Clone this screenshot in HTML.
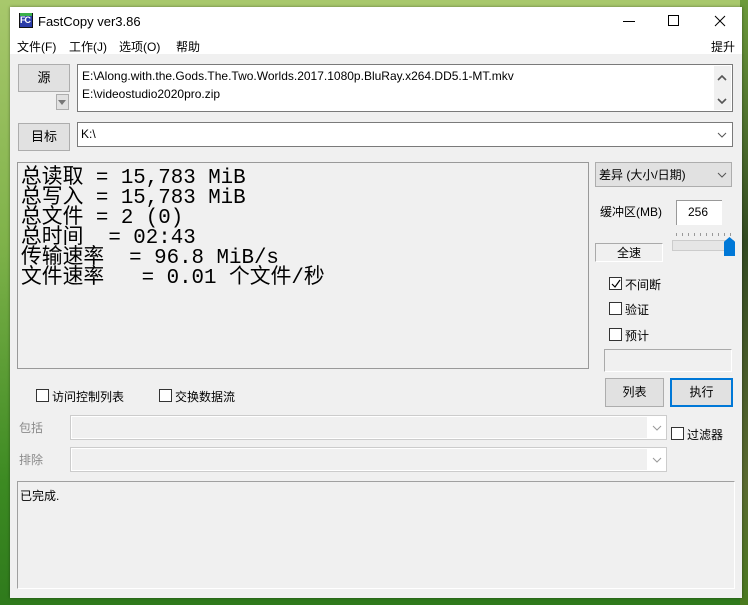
<!DOCTYPE html>
<html><head><meta charset="utf-8"><style>
*{margin:0;padding:0;box-sizing:border-box}
body{width:748px;height:605px;overflow:hidden;position:relative;font-family:"Liberation Sans","Noto Sans CJK SC",sans-serif;font-size:12px;color:#000;
background:linear-gradient(180deg,#a8c86c 0%,#7fb24a 40%,#3c8a22 80%,#2f7a1c 100%)}
.bgr{position:absolute;right:0;top:0;width:8px;height:605px;background:linear-gradient(180deg,#6c9a3a,#334a22 40%,#5a6a30 80%,#4a7a20)}
.a{position:absolute}
.win{position:absolute;left:10px;top:7px;width:732px;height:591px;background:#f0f0f0;box-shadow:0 0 3px rgba(0,0,0,.4)}
.t{position:absolute;white-space:nowrap}
.btn{position:absolute;background:#e1e1e1;border:1px solid #adadad;text-align:center;font-size:13px}
.box{position:absolute;background:#fff;border:1px solid #7a7a7a}
.cb{position:absolute;width:13px;height:13px;border:1px solid #333;background:#fff}
.dis{position:absolute;border:1px solid #ccc;background:#f0f0f0}
svg.c{position:absolute;width:10px;height:6px}
</style></head><body>
<div class="bgr"></div>
<div class="win"></div>
<div class="a" style="left:10px;top:7px;width:732px;height:47px;background:#fff"></div>
<div class="a" style="left:19px;top:13px;width:14px;height:15px;background:#2a3ca8;border:1px solid #111"></div>
<div class="a" style="left:20px;top:13px;width:12px;height:3px;background:#3ab04a"></div>
<div class="t" style="left:20px;top:15px;font-size:9px;font-weight:bold;color:#fff;letter-spacing:-1px">FC</div>
<div class="t" style="left:38px;top:14px;font-size:13px">FastCopy ver3.86</div>
<div class="a" style="left:623px;top:21px;width:12px;height:1px;background:#000"></div>
<div class="a" style="left:668px;top:15px;width:11px;height:11px;border:1px solid #000"></div>
<svg class="a" style="left:714px;top:15px;width:12px;height:12px" viewBox="0 0 12 12"><path d="M1 1L11 11M11 1L1 11" stroke="#000" stroke-width="1"/></svg>
<div class="t" style="left:17px;top:38px;font-size:12px">文件(F)</div>
<div class="t" style="left:69px;top:38px;font-size:12px">工作(J)</div>
<div class="t" style="left:119px;top:38px;font-size:12px">选项(O)</div>
<div class="t" style="left:176px;top:38px;font-size:12px">帮助</div>
<div class="t" style="left:711px;top:38px;font-size:12px">提升</div>

<div class="btn" style="left:18px;top:64px;width:52px;height:28px;line-height:26px">源</div>
<div class="a" style="left:56px;top:94px;width:13px;height:16px;background:#e1e1e1;border:1px solid #adadad"></div>
<div class="a" style="left:58px;top:100px;border-left:4px solid transparent;border-right:4px solid transparent;border-top:5px solid #777"></div>
<div class="box" style="left:77px;top:64px;width:656px;height:48px"></div>
<div class="a" style="left:714px;top:66px;width:17px;height:44px;background:#f0f0f0"></div>
<svg class="c" style="left:717px;top:75px" viewBox="0 0 10 6"><path d="M1 5L5 1L9 5" fill="none" stroke="#555" stroke-width="1.6"/></svg>
<svg class="c" style="left:717px;top:98px" viewBox="0 0 10 6"><path d="M1 1L5 5L9 1" fill="none" stroke="#555" stroke-width="1.6"/></svg>
<div class="t" style="left:82px;top:69px;font-size:12px">E:\Along.with.the.Gods.The.Two.Worlds.2017.1080p.BluRay.x264.DD5.1-MT.mkv</div>
<div class="t" style="left:82px;top:87px;font-size:12px">E:\videostudio2020pro.zip</div>

<div class="btn" style="left:18px;top:123px;width:52px;height:28px;line-height:26px">目标</div>
<div class="box" style="left:77px;top:122px;width:656px;height:25px"></div>
<div class="t" style="left:81px;top:127px;font-size:12px">K:\</div>
<svg class="c" style="left:717px;top:132px" viewBox="0 0 10 6"><path d="M1 1L5 5L9 1" fill="none" stroke="#555" stroke-width="1"/></svg>

<div class="a" style="left:17px;top:162px;width:572px;height:207px;background:#f0f0f0;border:1px solid #999"></div>
<div class="t" style="left:21px;top:169px;font-family:'Liberation Mono','Noto Sans CJK SC',monospace;font-size:20.8px;line-height:20px">总读取 = 15,783 MiB<br>总写入 = 15,783 MiB<br>总文件 = 2 (0)<br>总时间&nbsp; = 02:43<br>传输速率&nbsp; = 96.8 MiB/s<br>文件速率&nbsp;&nbsp; = 0.01 个文件/秒</div>

<div class="a" style="left:595px;top:162px;width:137px;height:25px;background:#e1e1e1;border:1px solid #adadad"></div>
<div class="t" style="left:599px;top:166px;font-size:12px">差异 (大小/日期)</div>
<svg class="c" style="left:717px;top:172px" viewBox="0 0 10 6"><path d="M1 1L5 5L9 1" fill="none" stroke="#555" stroke-width="1"/></svg>
<div class="t" style="left:600px;top:203px;font-size:12px">缓冲区(MB)</div>
<div class="a" style="left:676px;top:200px;width:46px;height:25px;background:#fff;border-left:1px solid #999;border-top:1px solid #999"></div>
<div class="t" style="left:688px;top:205px;font-size:12px">256</div>
<div class="a" style="left:595px;top:243px;width:68px;height:19px;border:1px solid #aaa;border-right-color:#fff;border-bottom-color:#fff"></div>
<div class="t" style="left:617px;top:244px;font-size:12px">全速</div>
<div class="a" style="left:676px;top:233px;width:56px;height:3px;background:repeating-linear-gradient(90deg,#999 0 1px,transparent 1px 6px)"></div>
<div class="a" style="left:672px;top:240px;width:62px;height:11px;background:#e6e6e6;border:1px solid #ccc"></div>
<div class="a" style="left:724px;top:237px;width:11px;height:19px;background:#0078d7;clip-path:polygon(50% 0,100% 25%,100% 100%,0 100%,0 25%)"></div>

<div class="cb" style="left:609px;top:277px"></div>
<svg class="a" style="left:611px;top:279px;width:10px;height:10px" viewBox="0 0 10 10"><path d="M1 5L4 8L9 1" fill="none" stroke="#000" stroke-width="1.2"/></svg>
<div class="t" style="left:625px;top:276px;font-size:12px">不间断</div>
<div class="cb" style="left:609px;top:302px"></div>
<div class="t" style="left:625px;top:301px;font-size:12px">验证</div>
<div class="cb" style="left:609px;top:328px"></div>
<div class="t" style="left:625px;top:327px;font-size:12px">预计</div>
<div class="a" style="left:604px;top:349px;width:128px;height:23px;border:1px solid #aaa;border-right-color:#fff;border-bottom-color:#fff"></div>
<div class="btn" style="left:605px;top:378px;width:59px;height:29px;line-height:27px;font-size:12px">列表</div>
<div class="btn" style="left:670px;top:378px;width:63px;height:29px;line-height:25px;font-size:12px;border:2px solid #0078d7">执行</div>

<div class="cb" style="left:36px;top:389px"></div>
<div class="t" style="left:52px;top:388px;font-size:12px">访问控制列表</div>
<div class="cb" style="left:159px;top:389px"></div>
<div class="t" style="left:175px;top:388px;font-size:12px">交换数据流</div>

<div class="t" style="left:19px;top:419px;font-size:12px;color:#8a8a8a">包括</div>
<div class="dis" style="left:70px;top:415px;width:597px;height:25px;background:#fff"></div>
<div class="a" style="left:72px;top:417px;width:575px;height:21px;background:#f0f0f0"></div>
<svg class="c" style="left:652px;top:425px" viewBox="0 0 10 6"><path d="M1 1L5 5L9 1" fill="none" stroke="#999" stroke-width="1"/></svg>
<div class="cb" style="left:671px;top:427px"></div>
<div class="t" style="left:687px;top:426px;font-size:12px">过滤器</div>
<div class="t" style="left:19px;top:451px;font-size:12px;color:#8a8a8a">排除</div>
<div class="dis" style="left:70px;top:447px;width:597px;height:25px;background:#fff"></div>
<div class="a" style="left:72px;top:449px;width:575px;height:21px;background:#f0f0f0"></div>
<svg class="c" style="left:652px;top:457px" viewBox="0 0 10 6"><path d="M1 1L5 5L9 1" fill="none" stroke="#999" stroke-width="1"/></svg>

<div class="a" style="left:17px;top:481px;width:718px;height:108px;border:1px solid #a0a0a0;border-right-color:#fff;border-bottom-color:#fff"></div>
<div class="t" style="left:20px;top:487px;font-size:12px">已完成.</div>
</body></html>
